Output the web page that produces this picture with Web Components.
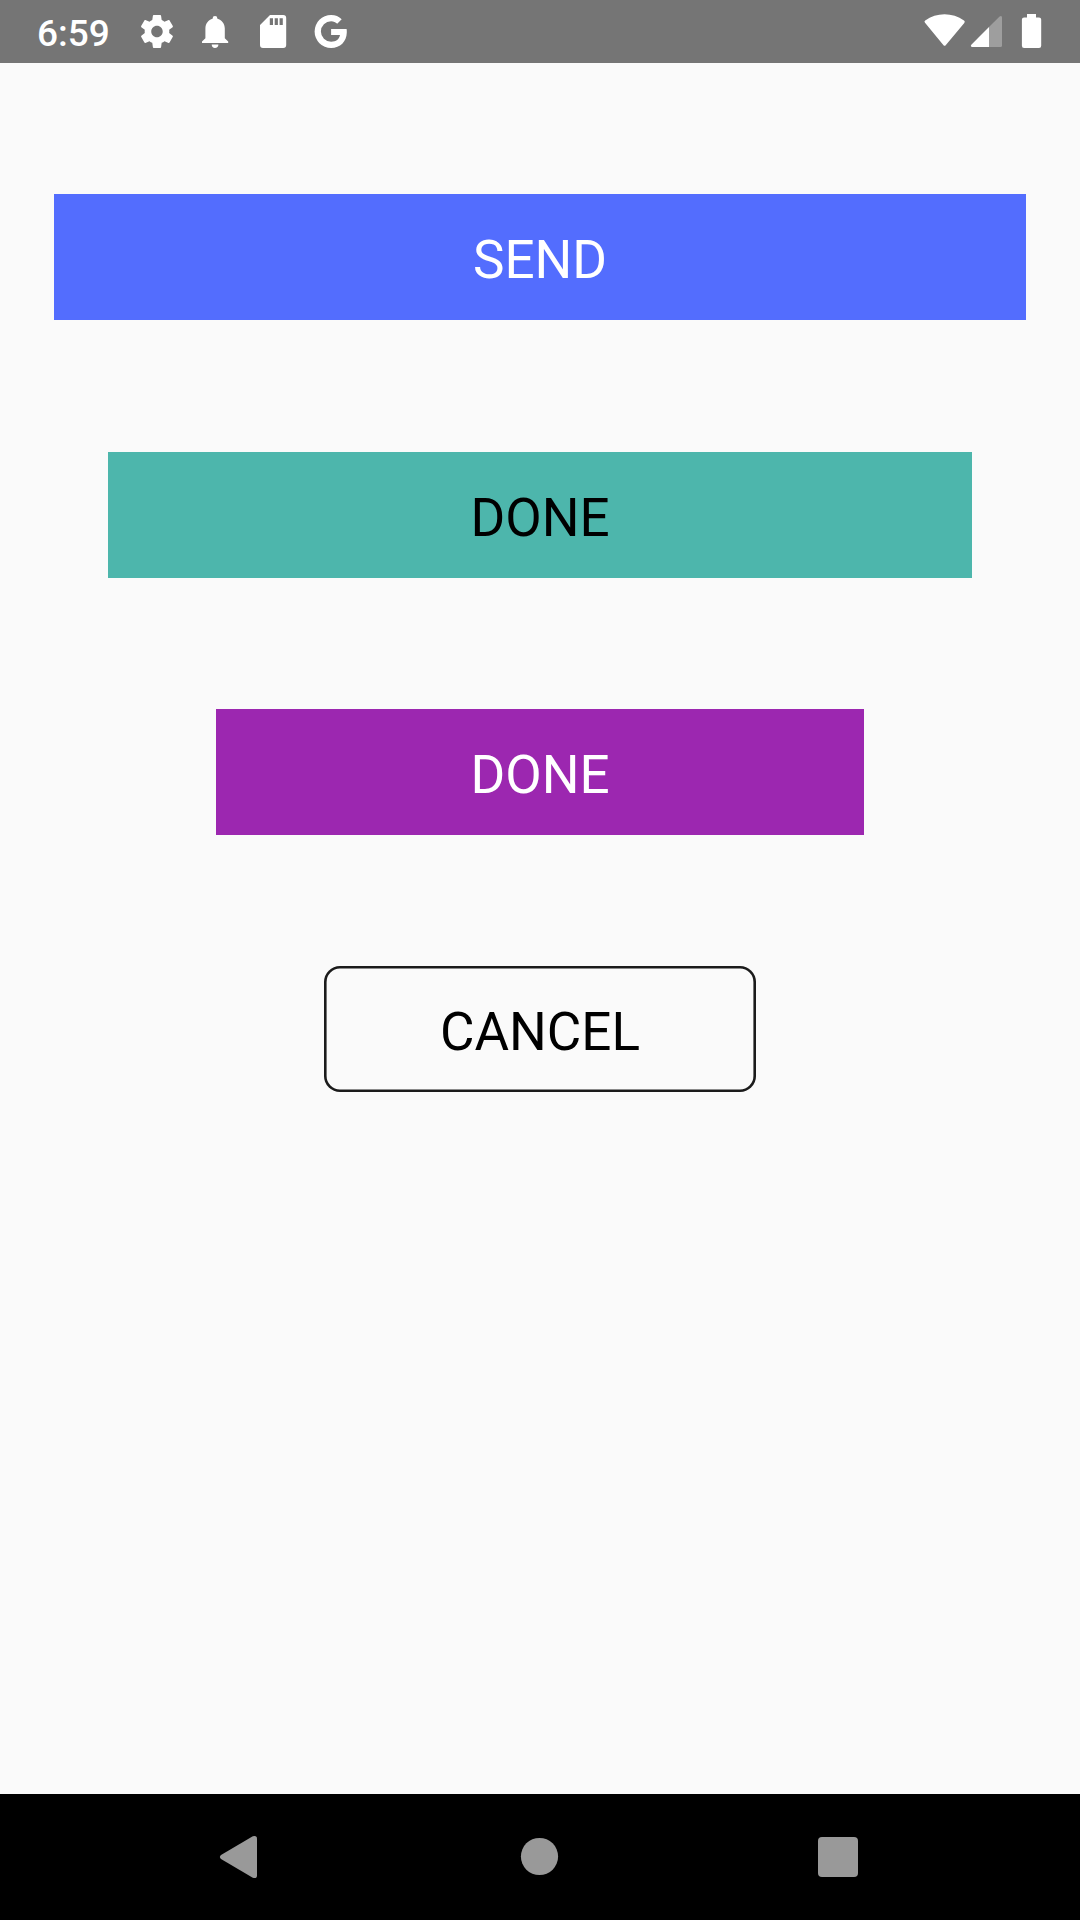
<!DOCTYPE html>
<html lang="en">
<head>
<meta charset="utf-8">
<title>Buttons</title>
<style>
html, body { margin: 0; height: 100%; }
body { font-family: Roboto, "Liberation Sans", sans-serif; background: #fafafa; overflow: hidden; }
</style>
</head>
<body>
<app-screen>
  <status-bar slot="top">6:59</status-bar>
  <app-button style="--w:972px;--bg:#536dfe;--fg:#fff">SEND</app-button>
  <app-button style="--w:864px;--bg:#4db6ac;--fg:#000;--gap:132px">DONE</app-button>
  <app-button style="--w:648px;--bg:#9c27b0;--fg:#fff">DONE</app-button>
  <app-button outlined style="--w:432px">CANCEL</app-button>
  <nav-bar slot="bottom"></nav-bar>
</app-screen>
<script>
function define(name, markup) {
  customElements.define(name, class extends HTMLElement {
    constructor() {
      super();
      this.attachShadow({ mode: "open" }).innerHTML = markup;
    }
  });
}

define("app-screen", `
<style>
:host { display: flex; flex-direction: column; width: 1080px; height: 1920px; background: #fafafa; }
main { flex: 1; display: flex; flex-direction: column; align-items: center; }
</style>
<slot name="top"></slot><main><slot></slot></main><slot name="bottom"></slot>`);

define("app-button", `
<style>
:host { display: block; width: var(--w); margin-top: var(--gap, 131px); }
button { display: flex; align-items: center; justify-content: center; box-sizing: border-box;
  width: 100%; height: 126px; padding: 6px 0 0; border: 0; margin: 0;
  background: var(--bg, transparent); color: var(--fg, #000);
  font: 400 53px/62px Roboto, "Liberation Sans", sans-serif; }
:host([outlined]) button { border-radius: 16px; box-shadow: inset 0 0 0 2.6px #1b1b1b; }
</style>
<button type="button"><span><slot></slot></span></button>`);

/* Each icon's viewBox is its own slice of the bar, in bar pixels. */
define("status-bar", `
<style>
:host { display: flex; height: 63px; background: #757575; color: #fff; fill: #fff; }
.time { display: flex; align-items: center; box-sizing: border-box; width: 128px; height: 63px;
  padding: 4px 0 0 37px; font-size: 37px; font-weight: 500; line-height: 43px; }
.space { flex: 1; }
svg { display: block; height: 63px; flex: none; }
</style>
<div class="time"><slot></slot></div>
<svg width="58" viewBox="128 0 58 63"><path transform="translate(137.3 11.8) scale(1.64)" d="M19.43 12.98c.04-.32.07-.64.07-.98s-.03-.66-.07-.98l2.11-1.65c.19-.15.24-.42.12-.64l-2-3.46c-.12-.22-.39-.3-.61-.22l-2.49 1c-.52-.4-1.08-.73-1.69-.98l-.38-2.65C14.46 2.18 14.25 2 14 2h-4c-.25 0-.46.18-.49.42l-.38 2.65c-.61.25-1.17.59-1.69.98l-2.49-1c-.23-.09-.49 0-.61.22l-2 3.46c-.13.22-.07.49.12.64l2.11 1.65c-.04.32-.07.65-.07.98s.03.66.07.98l-2.11 1.65c-.19.15-.24.42-.12.64l2 3.46c.12.22.39.3.61.22l2.49-1c.52.4 1.08.73 1.69.98l.38 2.65c.03.24.24.42.49.42h4c.25 0 .46-.18.49-.42l.38-2.65c.61-.25 1.17-.59 1.69-.98l2.49 1c.23.09.49 0 .61-.22l2-3.46c.12-.22.07-.49-.12-.64l-2.11-1.65zM12 15.5c-1.93 0-3.5-1.57-3.5-3.5s1.57-3.5 3.5-3.5 3.5 1.57 3.5 3.5-1.57 3.5-3.5 3.5z"/></svg>
<svg width="58" viewBox="186 0 58 63"><path d="M202 43V41.6L205.400 38.200V28.500C205.400 23.500 208.400 19.900 212.600 18.800V18.500A2.400 2.400 0 0 1 217.400 18.500V18.800C221.600 19.900 224.800 23.500 224.800 28.500V38.200L228.200 41.600V43ZM211.700 44.400H218.400C218.400 46.500 217 48 215 48S211.700 46.500 211.700 44.400Z"/></svg>
<svg width="58" viewBox="244 0 58 63"><path fill-rule="evenodd" d="M270 15H283.200A3 3 0 0 1 286.200 18V45A3 3 0 0 1 283.200 48H263A3 3 0 0 1 260 45V25ZM269.800 18.300V25H273V18.300ZM274.700 18.300V25H277.900V18.300ZM279.600 18.300V25H282.800V18.300Z"/></svg>
<svg width="58" viewBox="302 0 58 63"><path d="M331.100 29H346.600Q346.900 30.600 346.800 32.500C346.600 41.500 340.300 48 331.100 48A16.500 16.500 0 0 1 331.100 15C335.400 15 339 16.600 341.700 19.200L337.200 23.700C335.600 22.200 333.600 21.300 331.100 21.300A10.200 10.200 0 0 0 331.100 41.700C336.200 41.700 339.200 39.100 340 35H331.100Z"/></svg>
<div class="space"></div>
<svg width="50" viewBox="918 0 50 63"><path d="M925 22.800Q923.800 21.500 925.200 20.500C936.500 12 952.500 12 964 20.500Q965.400 21.500 964.300 22.900L945.700 45.200Q944.600 46.400 943.500 45.200Z"/></svg>
<svg width="44" viewBox="968 0 44 63"><path fill-opacity=".3" d="M989 27 999.600 16.400Q1002 15 1002 17.600V45.500Q1002 47 1000.500 47H989Z"/><path d="M989 27V47H972.200C970.800 47 970.500 45.500 971.300 44.700Z"/></svg>
<svg width="68" viewBox="1012 0 68 63"><path d="M1027 14H1036V17.400H1039Q1041.200 17.400 1041.200 19.600V45.800Q1041.200 48 1039 48H1024.100Q1021.900 48 1021.900 45.800V19.600Q1021.900 17.400 1024.100 17.400H1027Z"/></svg>`);

define("nav-bar", `
<style>
:host { display: flex; justify-content: space-between; box-sizing: border-box; height: 126px; padding: 0 202px 0 198px; background: #000; fill: #999; }
svg { display: block; flex: none; }
</style>
<svg width="80" height="126" viewBox="198 1794 80 126"><path d="M221 1859.100Q218.800 1857 221 1854.900L252.800 1836.200Q257 1835 257 1838.800V1875.200Q257 1879 252.800 1877.800Z"/></svg>
<svg width="80" height="126" viewBox="498 1794 80 126"><circle cx="539.500" cy="1856.500" r="18.600"/></svg>
<svg width="80" height="126" viewBox="798 1794 80 126"><rect x="818" y="1837" width="40" height="40" rx="4"/></svg>`);
</script>
</body>
</html>
